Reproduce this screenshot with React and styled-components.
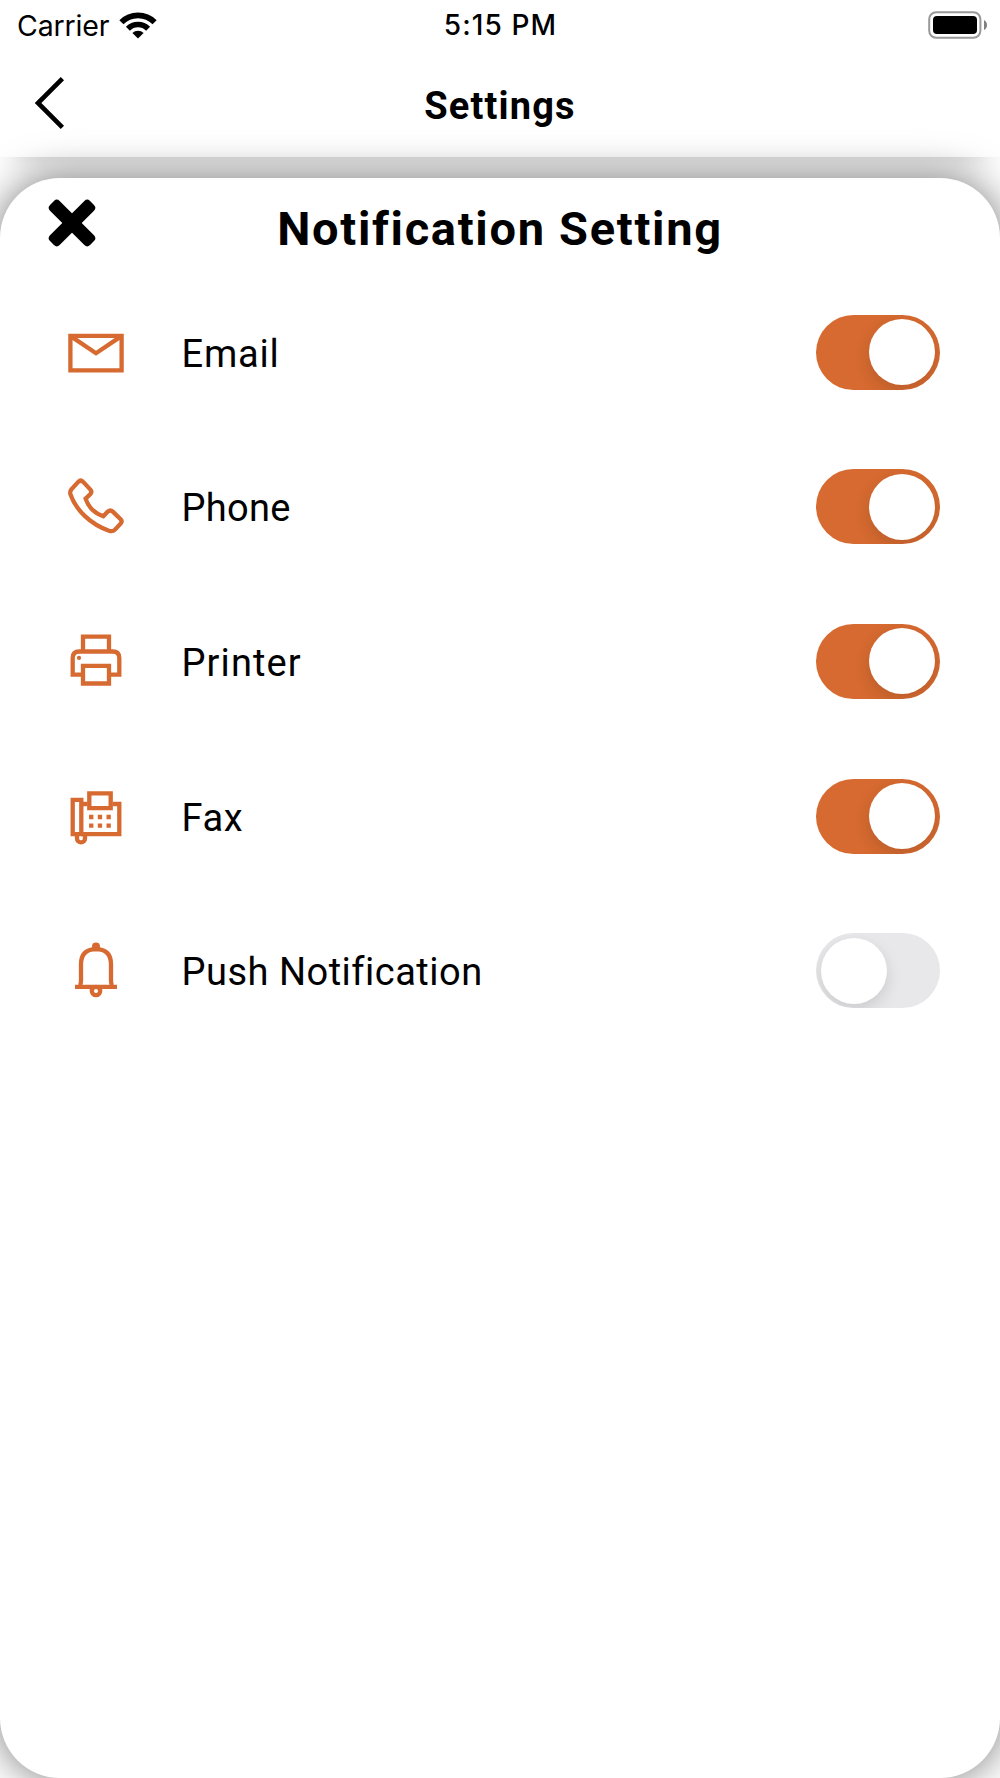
import { useState } from "react"
import styled, { createGlobalStyle } from "styled-components"

const ITEMS = [
  { name: "Email", Icon: MailIcon, on: true, spacing: 0.8 },
  { name: "Phone", Icon: PhoneIcon, on: true, spacing: 0.3 },
  { name: "Printer", Icon: PrinterIcon, on: true, spacing: 1.1 },
  { name: "Fax", Icon: FaxIcon, on: true, spacing: 0.6 },
  { name: "Push Notification", Icon: BellIcon, on: false, spacing: 0.5 },
]

export default function App(){
  const [active, setActive] = useState(ITEMS.map((item) => item.on))

  function toggle(index){
    setActive(active.map((value, i) => (i === index ? !value : value)))
  }

  return(
    <Screen>
      <GlobalStyle />
      <TopArea>
        <StatusBar>
          <Carrier>
            <span>Carrier</span>
            <WifiIcon />
          </Carrier>
          <Clock>5:15 PM</Clock>
          <BatteryIcon />
        </StatusBar>
        <NavBar>
          <IconButton aria-label="Back">
            <BackIcon />
          </IconButton>
          <NavTitle>Settings</NavTitle>
        </NavBar>
      </TopArea>
      <Sheet>
        <SheetHeader>
          <IconButton aria-label="Close">
            <CloseIcon />
          </IconButton>
          <SheetTitle>Notification Setting</SheetTitle>
        </SheetHeader>
        <List>
          {ITEMS.map(({ name, Icon, spacing }, index) => (
            <Item key={name}>
              <Icon />
              <Label $spacing={spacing}>{name}</Label>
              <Switch
                role="switch"
                aria-label={name}
                aria-checked={active[index]}
                $on={active[index]}
                onClick={() => toggle(index)}
              >
                <Knob />
              </Switch>
            </Item>
          ))}
        </List>
      </Sheet>
    </Screen>
  )
}

function WifiIcon(){
  return(
    <svg width="38" height="28" viewBox="0 0 38 28" fill="none" stroke="#000">
      <path d="M2.4 11.2A23.5 23.5 0 0 1 35.6 11.2" strokeWidth="5.8" />
      <path d="M8.9 17.7A14.3 14.3 0 0 1 29.1 17.7" strokeWidth="5.6" />
      <path d="M19 27.6L13.4 22A8 8 0 0 1 24.6 22Z" fill="#000" stroke="none" />
    </svg>
  )
}

function BatteryIcon(){
  return(
    <svg width="60" height="28" viewBox="0 0 60 28">
      <rect x="1.2" y="1.2" width="51.2" height="25.6" rx="7" fill="none" stroke="#999" strokeWidth="2" />
      <rect x="5" y="5" width="44" height="18" rx="4" fill="#000" />
      <path d="M56 9Q59 10.5 59 14T56 19Z" fill="#808080" />
    </svg>
  )
}

function BackIcon(){
  return(
    <svg width="32" height="54" viewBox="0 0 32 54" fill="none" stroke="#000" strokeWidth="4.6">
      <path d="M29.4 2.6L5 27L29.4 51.4" />
    </svg>
  )
}

function CloseIcon(){
  return(
    <svg width="48" height="48" viewBox="-24 -24 48 48">
      <rect x="-28.3" y="-6.8" width="56.6" height="13.6" rx="4" transform="rotate(45)" />
      <rect x="-28.3" y="-6.8" width="56.6" height="13.6" rx="4" transform="rotate(-45)" />
    </svg>
  )
}

function MailIcon(){
  return(
    <ItemIcon viewBox="0 0 56 56">
      <path d="M2.4 11.8H53.6V46.4H2.4Z" />
      <path d="M3 12.4L28 29.2L53 12.4" />
    </ItemIcon>
  )
}

function PhoneIcon(){
  return(
    <ItemIcon viewBox="0 0 56 56">
      <path d="M10.2 2.9Q12.7 .4 15.2 2.9L22.4 10.6Q24.3 12.9 22.4 15L17.6 19.6Q21.8 32.5 35.3 37.3L39.8 32.6Q42.3 30.2 44.8 32.6L52.6 40.2Q54.6 42.4 52.6 44.6L47 50.6Q44.7 53 41 51.8C22.5 45.2 8.2 31.5 2.5 15.5Q1.6 12.6 3.4 10.4Z" />
    </ItemIcon>
  )
}

function PrinterIcon(){
  return(
    <ItemIcon viewBox="0 0 56 56">
      <path d="M15 18.5V3.6H41V18.5" />
      <path d="M15 41.7H4.7V25Q4.7 18.5 11.2 18.5H44.8Q51.3 18.5 51.3 25V41.7H41" />
      <path d="M15 32.9H41V50.5H15Z" />
      <circle cx="11" cy="24.9" r="2.1" fill="#d66a30" stroke="none" />
    </ItemIcon>
  )
}

function FaxIcon(){
  return(
    <ItemIcon viewBox="0 0 56 56">
      <path d="M4.7 11.9H13.3V46.2H4.7Z" />
      <path d="M13.3 16H19.5M44.5 16H51.3V46.2H13.3" />
      <path d="M21.3 5.3H42.7V20.2H21.3Z" />
      <path d="M9 48V50.4A4 4 0 0 0 17 50.4V48" />
      <path d="M21.1 29H44M21.1 37.7H44" strokeWidth="4.3" strokeDasharray="4.3 4.4" />
    </ItemIcon>
  )
}

function BellIcon(){
  return(
    <ItemIcon viewBox="0 0 56 56">
      <path d="M7 43.8H49" />
      <path d="M11.8 42.6Q13 41 13 38V21Q13.2 6.4 28 6.2Q42.8 6.4 43 21V38Q43 41 44.2 42.6" />
      <circle cx="28" cy="3.6" r="4" fill="#d66a30" stroke="none" />
      <circle cx="28" cy="48" r="4.2" />
    </ItemIcon>
  )
}

const GlobalStyle = createGlobalStyle`
*{
  box-sizing: border-box;
  margin: 0;
  padding: 0;
}

body{
  background: #fff;
  color: #000;
  font-family: Roboto, "Noto Sans", sans-serif;
  font-variant-ligatures: none;
}

button{
  border: none;
  background: none;
  cursor: pointer;
}

svg{
  display: block;
  flex-shrink: 0;
}
`

const Screen = styled.main`
width: 1000px;
height: 1778px;
display: flex;
flex-direction: column;
overflow: hidden;
background: #fff;
`

const TopArea = styled.div`
height: 157px;
margin-bottom: 21px;
background: #fff;
box-shadow: 0 16px 28px -16px rgba(0, 0, 0, 0.24);
`

const StatusBar = styled.div`
height: 51px;
padding: 0 12px 2px 16px;
display: grid;
grid-template-columns: 1fr auto 1fr;
align-items: center;
font-family: Inter, sans-serif;
font-size: 28px;

> :last-child{
  justify-self: end;
}
`

const Carrier = styled.div`
display: flex;
align-items: center;
gap: 10px;
padding-left: 1px;
font-size: 28.5px;
letter-spacing: -0.15px;

span{
  padding-top: 1px;
}
`

const Clock = styled.p`
padding: 1px 3px 0 0;
font-weight: 500;
letter-spacing: 1.1px;
`

const NavBar = styled.header`
height: 106px;
padding: 0 33px 2px;
display: grid;
grid-template-columns: 60px 1fr 60px;
align-items: center;
`

const IconButton = styled.button`
display: flex;
`

const NavTitle = styled.h2`
padding-top: 6px;
text-align: center;
font-size: 38px;
font-weight: 700;
letter-spacing: 1.15px;
`

const Sheet = styled.section`
height: 1600px;
border-radius: 60px;
background: #fff;
box-shadow: 0 0 40px rgba(0, 0, 0, 0.54);
`

const SheetHeader = styled.div`
height: 97px;
padding: 0 48px 7px;
display: grid;
grid-template-columns: 60px 1fr 60px;
align-items: center;
`

const SheetTitle = styled.h1`
padding-top: 11px;
text-align: center;
font-size: 47px;
font-weight: 700;
letter-spacing: 1.7px;
`

const List = styled.ul`
list-style: none;
`

const Item = styled.li`
height: 154.6px;
padding: 0 60.5px 0 68px;
display: flex;
align-items: center;
`

const ItemIcon = styled.svg`
width: 56px;
height: 56px;
overflow: visible;
fill: none;
stroke: #d66a30;
stroke-width: 4.3px;
`

const Label = styled.p`
flex: 1;
padding: 3px 0 0 57.5px;
font-size: 38px;
letter-spacing: ${(props) => props.$spacing}px;
`

const Switch = styled.button`
width: 123.5px;
height: 75px;
padding: 0 4.5px;
display: flex;
align-items: center;
justify-content: ${(props) => (props.$on ? "flex-end" : "flex-start")};
border-radius: 38px;
background: ${(props) => (props.$on ? "#d66a30" : "#e8e8ea")};
overflow: hidden;
`

const Knob = styled.span`
width: 66px;
height: 66px;
border-radius: 50%;
background: #fff;
box-shadow: 0 6px 16px rgba(0, 0, 0, 0.13);
`
